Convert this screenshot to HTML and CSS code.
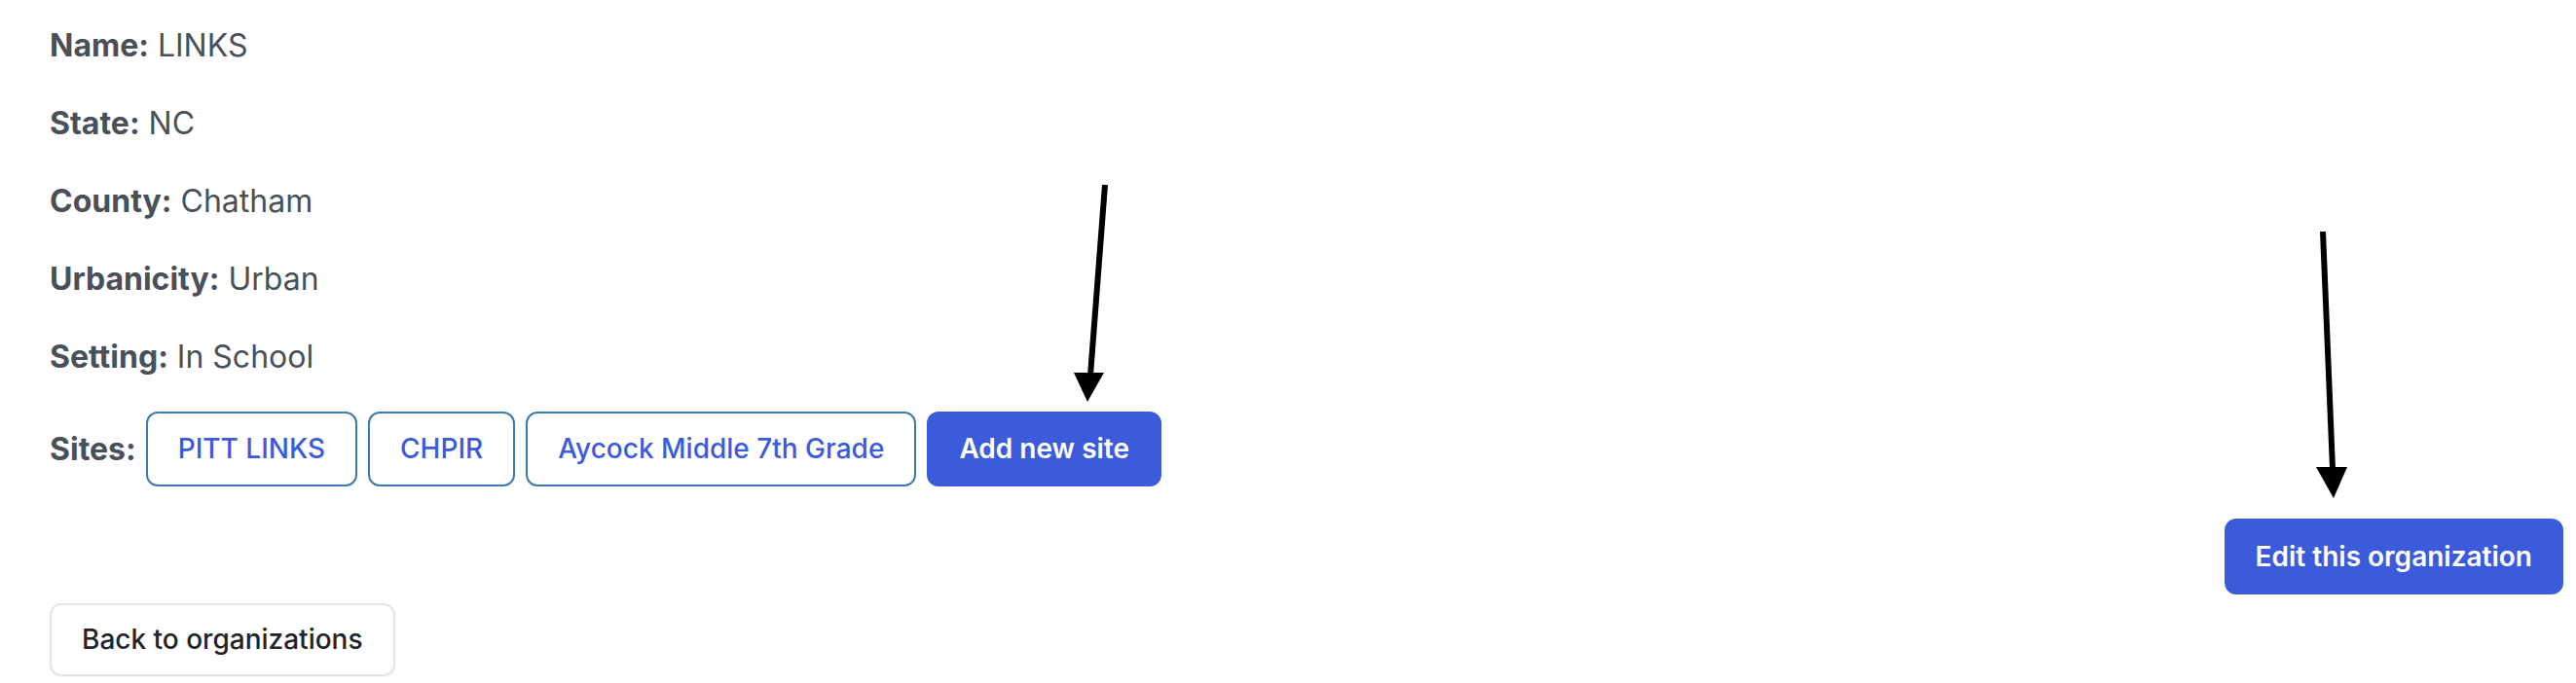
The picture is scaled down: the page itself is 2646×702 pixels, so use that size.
FILE: index.html
```html
<!DOCTYPE html>
<html>
	<head>
		<meta charset="UTF-8">
		<title>LINKS</title>
		<link rel="stylesheet" href="styles.css">
	</head>
	<body>
		<main class="org">
			<p class="field"><strong>Name:</strong> LINKS</p>
			<p class="field"><strong>State:</strong> NC</p>
			<p class="field"><strong>County:</strong> Chatham</p>
			<p class="field"><strong>Urbanicity:</strong> Urban</p>
			<p class="field"><strong>Setting:</strong> In School</p>
			<div class="sites">
				<strong>Sites:</strong>
				<a href="#" class="btn btn-outline">PITT LINKS</a>
				<a href="#" class="btn btn-outline">CHPIR</a>
				<a href="#" class="btn btn-outline">Aycock Middle 7th Grade</a>
				<a href="#" class="btn btn-primary">Add new site</a>
			</div>
			<div class="actions">
				<a href="#" class="btn btn-primary">Edit this organization</a>
			</div>
			<a href="#" class="btn btn-light">Back to organizations</a>
		</main>

		<svg class="marks" width="2646" height="702" viewBox="0 0 2646 702">
			<line x1="1135" y1="190" x2="1120" y2="386" stroke="#000" stroke-width="6" />
			<polygon points="1103,383 1134,383 1117,413" fill="#000" />
			<line x1="2386" y1="238" x2="2396" y2="482" stroke="#000" stroke-width="6" />
			<polygon points="2379,480 2411,480 2397,512" fill="#000" />
		</svg>
	</body>
</html>
```

FILE: styles.css
```css
* {
	padding: 0;
	margin: 0;
	box-sizing: border-box;
}
body {
	position: relative;
	width: 2646px;
	height: 702px;
	overflow: hidden;
	background: #fff;
	font-family: Inter, "Liberation Sans", sans-serif;
	color: #495057;
}
.org {
	padding: 23px 13px 0 51px;
}
.field {
	font-size: 32px;
	line-height: 48px;
	margin-bottom: 32px;
}
.field strong,
.sites strong {
	font-weight: 700;
}
.sites {
	display: flex;
	align-items: center;
	gap: 11px;
	font-size: 32px;
	line-height: 48px;
}
.sites strong {
	margin-right: -1px;
}
.btn {
	display: inline-block;
	font-size: 28px;
	line-height: 41px;
	padding: 16px 31px;
	border: 2px solid transparent;
	border-radius: 12px;
	text-decoration: none;
	white-space: nowrap;
	font-weight: 500;
}
.btn-outline {
	color: #3b5bdb;
	border-color: #3d7ab3;
	background: #fff;
}
.btn-primary {
	color: #fff;
	background: #3b5bdb;
	border-color: #3b5bdb;
	font-weight: 600;
}
.btn-light {
	color: #212529;
	background: #fff;
	border-color: #e3e5e8;
	box-shadow: 0 1px 2px rgba(0, 0, 0, 0.05);
	line-height: 39px;
}
.actions {
	display: flex;
	justify-content: flex-end;
	margin-top: 33px;
	margin-bottom: 9px;
}
.actions .btn {
	line-height: 42px;
	padding: 16px 30px;
}
.marks {
	position: absolute;
	top: 0;
	left: 0;
	pointer-events: none;
}
```
